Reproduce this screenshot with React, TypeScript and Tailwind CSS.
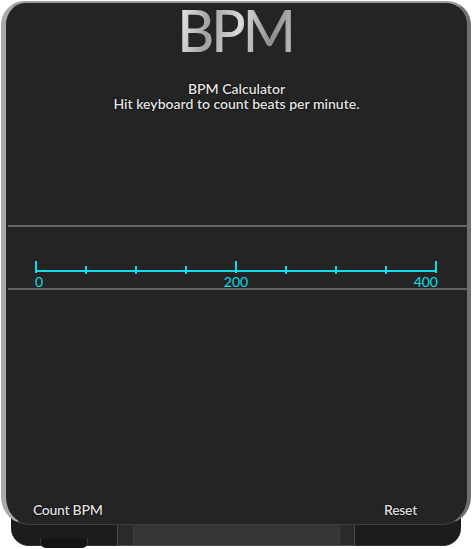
export default function App() {
  const ticks = Array.from({ length: 9 }, (_, i) => i);
  return (
    <div className="w-[472px] h-[549px] bg-white relative overflow-hidden font-['Lato',sans-serif]">
      <div className="relative flex flex-col h-[547px] pt-[1px] px-[1px]">
        <div className="relative z-10 flex flex-col h-[524px] shrink-0 bg-[#242424] rounded-t-[24px] rounded-b-[28px] border-l-[5px] border-l-[#a9a9a9] border-t-[2px] border-t-[#9c9c9c] border-r-[4px] border-r-[#6f6f6f] border-b-[1px] border-b-[#3e3e3e]">
          <div className="h-[58px] text-center text-[57px] leading-[54px] font-medium tracking-[-3px]">
            <span className="pr-[3px] bg-[linear-gradient(100deg,#f6f6f6_0%,#a0a0a0_28%,#dadada_52%,#8e8e8e_78%,#cacaca_100%)] bg-clip-text text-transparent">
              BPM
            </span>
          </div>
          <div className="mt-[20px] text-center text-[14px] leading-[15px] font-semibold text-[#e4e4e4] [text-shadow:0_0_2px_#000,0_0_1px_#000]">
            <div>BPM Calculator</div>
            <div>Hit keyboard to count beats per minute.</div>
          </div>
          <div className="mt-[114px] ml-[2px] h-[2px] bg-[#636363]" />
          <div className="mt-[33px] ml-[28px] w-[404px]">
            <svg width="404" height="15" viewBox="0 0 404 15" className="block">
              <line x1="2" y1="11" x2="402" y2="11" stroke="#10dcea" strokeWidth="2" />
              {ticks.map((i) => {
                const x = 2 + i * 50;
                const major = i % 4 === 0;
                return (
                  <line
                    key={i}
                    x1={x}
                    x2={x}
                    y1={major ? 1 : 6}
                    y2={major ? 13 : 14}
                    stroke="#10dcea"
                    strokeWidth="2"
                  />
                );
              })}
            </svg>
            <div className="grid grid-cols-3 text-[14px] leading-[13px] text-[#10dcea] w-[404px]">
              <span className="text-left pl-[1px]">0</span>
              <span className="text-center">200</span>
              <span className="text-right">400</span>
            </div>
          </div>
          <div className="ml-[2px] h-[2px] bg-[#636363]" />
          <div className="flex-1" />
          <div className="flex justify-between pl-[27px] pr-[50px] pb-[6px] text-[14px] leading-[16px] font-semibold tracking-[-0.3px] text-[#dedede] [text-shadow:0_0_2px_#000,0_0_1px_#000]">
            <span>Count BPM</span>
            <span>Reset</span>
          </div>
        </div>
        <div className="-mt-[12px] mx-[10px] h-[33px] bg-[#1c1c1c] rounded-b-[18px] border-b border-b-[#2c2c2c]" />
      </div>
      <div className="absolute left-[117px] top-[510px] w-[238px] h-[36px] bg-[#4a4a4a] [clip-path:polygon(0_14px,14px_0,224px_0,238px_14px,238px_36px,0_36px)]">
        <div className="absolute inset-[1px] bg-[#2a2a2a] [clip-path:polygon(0_13px,13px_0,223px_0,236px_13px,236px_34px,0_34px)]" />
        <div className="absolute left-[16px] right-[15px] top-[2px] bottom-[1px] bg-[#353535] border-t border-t-[#575757] border-x border-x-[#3d3d3d]" />
      </div>
      <div className="absolute left-[40px] top-[538px] w-[48px] h-[10px] bg-[#151515] rounded-b-[6px] border-x border-x-[#3a3a3a]" />
    </div>
  );
}
